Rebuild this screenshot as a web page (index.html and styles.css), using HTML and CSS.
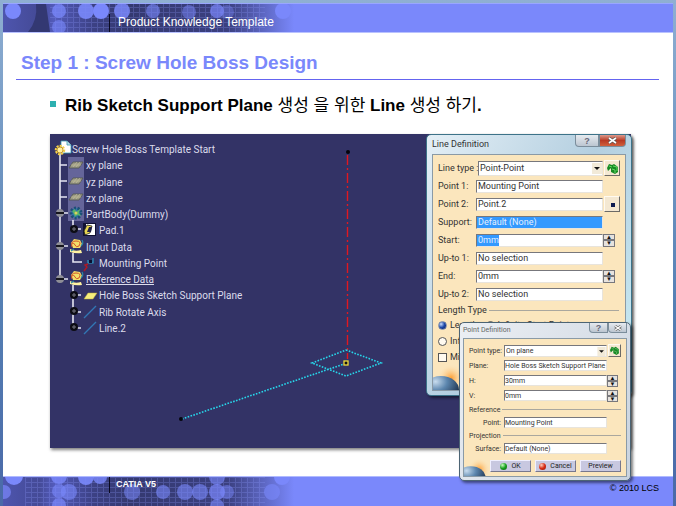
FILE: index.html
```
<!DOCTYPE html>
<html lang="ko">
<head>
    <meta charset="UTF-8">
    <meta name="viewport" content="width=device-width, initial-scale=1.0">
    <title>Product Knowledge Template</title>
    <link rel="stylesheet" href="styles.css">
</head>
<body>
    <div class="slide">
        <header class="banner">
            <svg class="banner-art" width="300" height="28" viewBox="3 4 300 28" aria-hidden="true">
                <defs>
                    <linearGradient id="fade" x1="0" x2="1" y1="0" y2="0">
                        <stop offset="0" stop-color="#4e55ae"/>
                        <stop offset="0.12" stop-color="#444a96"/>
                        <stop offset="0.17" stop-color="#535bbb"/>
                        <stop offset="0.3" stop-color="#3c4184"/>
                        <stop offset="0.42" stop-color="#343970"/>
                        <stop offset="0.75" stop-color="#3b4080"/>
                        <stop offset="0.97" stop-color="#7a88fb"/>
                    </linearGradient>
                    <pattern id="grid" width="6" height="5" patternUnits="userSpaceOnUse">
                        <path d="M1.5 0v5M0 2.5h6" stroke="#8f9cff" stroke-width="1" opacity="0.25"/>
                    </pattern>
                </defs>
                <rect x="3" y="4" width="300" height="28" fill="url(#fade)"/>
                <rect x="50" y="4" width="215" height="28" fill="url(#grid)"/>
                <path d="M36 4h10l4 28h-22q10-12 8-28z" fill="#333872"/>
                <g fill="#7a88fb">
                    <circle cx="13" cy="11" r="8"/>
                    <circle cx="59" cy="11" r="7" opacity="0.75"/>
                    <circle cx="59" cy="27" r="7" opacity="0.6"/>
                    <circle cx="86" cy="11" r="8" opacity="0.9"/>
                    <circle cx="101" cy="11" r="8"/>
                    <circle cx="122" cy="11" r="8" opacity="0.85"/>
                    <circle cx="153" cy="11" r="7" opacity="0.6"/>
                    <circle cx="189" cy="12" r="7" opacity="0.5"/>
                    <circle cx="217" cy="11" r="7" opacity="0.7"/>
                    <circle cx="227" cy="12" r="7" opacity="0.4"/>
                    <circle cx="283" cy="11" r="8"/>
                </g>
                <path d="M109.5 14v18" stroke="#0a0a20"/>
            </svg>
            <span class="banner-title">Product Knowledge Template</span>
        </header>

        <main>
            <h1 class="title">Step 1 : Screw Hole Boss Design</h1>
            <h2 class="topic">Rib Sketch Support Plane <span class="ko">생성 을 위한</span> Line <span class="ko">생성 하기</span>.</h2>

            <section class="viewport">
                <svg class="scene" width="420" height="314" viewBox="50 134 420 314" aria-hidden="true">
                    <defs>
                        <g id="minus">
                            <circle r="4" fill="#8e8e96"/>
                            <path d="M-4 0h8" stroke="#16161e" stroke-width="2"/>
                        </g>
                        <g id="plus">
                            <circle r="4" fill="#0c0c14"/>
                            <path d="M-2 0h4M0 -2v4" stroke="#777780"/>
                        </g>
                        <g id="plane">
                            <path d="M-7 3l4-6h10l-4 6z" fill="#9c9a86" stroke="#52564c" stroke-width="0.8"/>
                            <path d="M-3 2l4-5M0 2l4-5M-5 0h10" stroke="#c2be9a" stroke-width="0.7"/>
                        </g>
                        <g id="geoset">
                            <path d="M-5 -3l3-4 6 1 2 4-2 4h-7z" fill="#f3e06a"/>
                            <path d="M-4 1q-2-6 4-6t3 5q-3 2-4-1t-3-1" fill="none" stroke="#d4552a"/>
                            <path d="M-6 3q5 3 11 1l1 3q-6 1-12-1z" fill="#fff3a0"/>
                            <path d="M6 -6q2 3-1 6M-5 5l3-2" fill="none" stroke="#2b8ca8" stroke-width="1.2"/>
                        </g>
                    </defs>
                    <!-- tree branches -->
                    <rect x="68" y="157" width="16" height="64" fill="#65659a"/>
                    <path d="M60 152v127M60 165h7M60 181h7M60 197h7M60 213h8M60 246h8M60 279h8M73 220v9h8M73 253v9h9M73 285v43M74 295h7M74 312h7M74 328h7" fill="none" stroke="#e6e6f2" stroke-width="1.6"/>
                    <path d="M61 141h6l4 4v8h-10z" fill="#fff" stroke="#3a9ab0" stroke-width="0.8"/>
                    <path d="M67 141v4h4" fill="#bde0e8" stroke="#3a9ab0" stroke-width="0.8"/>
                    <circle cx="60" cy="150" r="4" fill="none" stroke="#f4d04a" stroke-width="2.5" stroke-dasharray="2 1"/>
                    <circle cx="60" cy="150" r="3" fill="#fff0a0" stroke="#b8861c" stroke-width="0.8"/>
                    <use href="#plane" x="76" y="165"/>
                    <use href="#plane" x="76" y="181"/>
                    <use href="#plane" x="76" y="197"/>
                    <circle cx="76" cy="213" r="5" fill="#2f79a8" stroke="#1c4f77" stroke-width="3" stroke-dasharray="2 1.5"/>
                    <path d="M72 211l3-2 1 3 4-3-1 4 2 3-4-1-2 2-1-3z" fill="#57b36a"/>
                    <circle cx="76" cy="213" r="1.5" fill="#d8d060"/>
                    <rect x="83" y="223" width="13" height="13" fill="#111133"/>
                    <path d="M86 224h9v11h-9z" fill="#fff"/>
                    <path d="M84 231l3-6 5 1-2 7-5 2z" fill="#e8d552" stroke="#222" stroke-width="0.8"/>
                    <path d="M87 232l2-5 3 0-1 5z" fill="#20204a"/>
                    <use href="#geoset" x="76" y="246"/>
                    <use href="#geoset" x="76" y="278"/>
                    <path d="M88 260v3h5v-5" fill="none" stroke="#2b9ac4" stroke-width="1.2"/>
                    <rect x="89" y="260" width="3" height="3" fill="#0a1030"/>
                    <path d="M88 264l-3 1 2 2-3 4" fill="none" stroke="#b01824" stroke-width="1.4"/>
                    <path d="M84 299l4-6h9l-4 6z" fill="#f6ee7c" stroke="#b8aa3a" stroke-width="0.5"/>
                    <path d="M84 318l12-12M84 334l12-12" stroke="#3277b4" stroke-width="1.4"/>
                    <use href="#minus" x="60" y="213"/>
                    <use href="#minus" x="60" y="246"/>
                    <use href="#minus" x="60" y="279"/>
                    <use href="#plus" x="74" y="229"/>
                    <use href="#plus" x="74" y="295"/>
                    <use href="#plus" x="74" y="311"/>
                    <use href="#plus" x="74" y="327"/>
                    <!-- sketch geometry -->
                    <path d="M347.5 155v204" stroke="#e01820" stroke-width="1.4" stroke-dasharray="10 3 2 3"/>
                    <circle cx="348" cy="152" r="2" fill="#05050c"/>
                    <path d="M346 350l35 13-35 13-34-13zM182 419l162-55" fill="none" stroke="#27d6ea" stroke-width="1.6" stroke-dasharray="1.6 1.4"/>
                    <circle cx="181" cy="419" r="2" fill="#05050c"/>
                    <rect x="344" y="361" width="4" height="4" fill="#111" stroke="#f0dc3c" stroke-width="1.3"/>
                </svg>

                <ul class="tree">
                    <li>Screw Hole Boss Template Start</li>
                    <li class="level1">xy plane</li>
                    <li class="level1">yz plane</li>
                    <li class="level1">zx plane</li>
                    <li class="level1">PartBody(Dummy)</li>
                    <li class="level2">Pad.1</li>
                    <li class="level1">Input Data</li>
                    <li class="level2">Mounting Point</li>
                    <li class="level1"><u>Reference Data</u></li>
                    <li class="level2">Hole Boss Sketch Support Plane</li>
                    <li class="level2">Rib Rotate Axis</li>
                    <li class="level2">Line.2</li>
                </ul>

                <form class="window line-window">
                    <div class="window-bar">
                        <span class="window-title">Line Definition</span>
                        <span class="window-buttons">
                            <button type="button">?</button><button type="button" class="close">
                                <svg width="9" height="7" viewBox="0 0 9 7" aria-label="Close"><path d="M1 1l7 5M8 1l-7 5" stroke="#555" stroke-width="3"/><path d="M1 1l7 5M8 1l-7 5" stroke="#fff" stroke-width="1.6"/></svg>
                            </button>
                        </span>
                    </div>
                    <div class="window-body">
                        <svg class="corner" width="32" height="26" viewBox="0 0 32 26" aria-hidden="true">
                            <defs>
                                <radialGradient id="glow"><stop offset="0" stop-color="#ff9d2e"/><stop offset="1" stop-color="#fbe6bd" stop-opacity="0"/></radialGradient>
                                <radialGradient id="globe" cx="0.35" cy="0.2" r="0.8"><stop offset="0" stop-color="#c8dcee"/><stop offset="0.4" stop-color="#5c86ae"/><stop offset="1" stop-color="#14243c"/></radialGradient>
                            </defs>
                            <circle cx="18" cy="14" r="14" fill="url(#glow)"/>
                            <ellipse cx="8" cy="26" rx="18" ry="14" fill="url(#globe)"/>
                        </svg>
                        <div class="row">
                            <label for="lineType">Line type :</label>
                            <span class="combo">
                                <select id="lineType"><option>Point-Point</option></select>
                                <svg class="arrow" width="10" height="11" viewBox="0 0 10 11" aria-hidden="true"><rect width="10" height="11" fill="#f2ead8"/><path d="M2 4h6l-3 3z" fill="#111"/></svg>
                            </span>
                            <button type="button" class="tool" aria-label="Lock">
                                <svg width="13" height="11" viewBox="0 0 13 11"><path d="M1 5l2-4 3 1 2-1 4 3v5l-3 2-4-2V5L2 8z" fill="#168a24"/><path d="M3 3l3 1M7 3l4 1v4M6 6l3 1v3" fill="none" stroke="#62d766"/></svg>
                            </button>
                        </div>
                        <div class="row">
                            <label for="point1">Point 1:</label>
                            <input type="text" id="point1" value="Mounting Point">
                        </div>
                        <div class="row">
                            <label for="point2">Point 2:</label>
                            <input type="text" id="point2" value="Point.2">
                            <button type="button" class="tool" aria-label="Point">
                                <svg width="13" height="11" viewBox="0 0 13 11"><path d="M5 4h4v4h-4z" fill="#0c1a50"/></svg>
                            </button>
                        </div>
                        <div class="row">
                            <label for="support">Support:</label>
                            <input type="text" id="support" class="active" value="Default (None)">
                        </div>
                        <div class="row">
                            <label for="start">Start:</label>
                            <input type="text" id="start" class="selected" value="0mm">
                            <span class="spin"><button type="button">▲</button><button type="button">▼</button></span>
                        </div>
                        <div class="row">
                            <label for="upto1">Up-to 1:</label>
                            <input type="text" id="upto1" value="No selection">
                        </div>
                        <div class="row">
                            <label for="end">End:</label>
                            <input type="text" id="end" value="0mm">
                            <span class="spin"><button type="button">▲</button><button type="button">▼</button></span>
                        </div>
                        <div class="row">
                            <label for="upto2">Up-to 2:</label>
                            <input type="text" id="upto2" value="No selection">
                        </div>
                        <div class="group">Length Type</div>
                        <div class="choices">
                            <label><input type="radio" name="length" checked>Length</label>
                            <label><input type="radio" name="length">Infinite Start Point</label>
                        </div>
                        <div class="choices">
                            <label><input type="radio" name="length">Inf</label>
                        </div>
                        <div class="choices">
                            <label><input type="checkbox">Mi</label>
                        </div>
                    </div>
                </form>

                <form class="window point-window">
                    <div class="window-bar">
                        <span class="window-title">Point Definition</span>
                        <span class="window-buttons">
                            <button type="button">?</button><button type="button">
                                <svg width="8" height="6" viewBox="0 0 9 7" aria-label="Close"><path d="M1 1l7 5M8 1l-7 5" stroke="#666" stroke-width="3"/><path d="M1 1l7 5M8 1l-7 5" stroke="#fff" stroke-width="1.4"/></svg>
                            </button>
                        </span>
                    </div>
                    <div class="window-body">
                        <svg class="corner" width="27" height="18" viewBox="0 0 32 22" aria-hidden="true">
                            <circle cx="18" cy="14" r="14" fill="url(#glow)"/>
                            <ellipse cx="8" cy="24" rx="18" ry="14" fill="url(#globe)"/>
                        </svg>
                        <div class="row">
                            <label for="pointType">Point type:</label>
                            <span class="combo">
                                <select id="pointType"><option>On plane</option></select>
                                <svg class="arrow" width="9" height="9" viewBox="0 0 10 11" aria-hidden="true"><rect width="10" height="11" fill="#f2ead8"/><path d="M2 4h6l-3 3z" fill="#111"/></svg>
                            </span>
                            <button type="button" class="tool" aria-label="Lock">
                                <svg width="11" height="9" viewBox="0 0 13 11"><path d="M1 5l2-4 3 1 2-1 4 3v5l-3 2-4-2V5L2 8z" fill="#168a24"/><path d="M3 3l3 1M7 3l4 1v4M6 6l3 1v3" fill="none" stroke="#62b766"/></svg>
                            </button>
                        </div>
                        <div class="row">
                            <label for="plane1">Plane:</label>
                            <input type="text" id="plane1" value="Hole Boss Sketch Support Plane">
                        </div>
                        <div class="row">
                            <label for="h">H:</label>
                            <input type="text" id="h" value="30mm">
                            <span class="spin"><button type="button">▲</button><button type="button">▼</button></span>
                        </div>
                        <div class="row">
                            <label for="v">V:</label>
                            <input type="text" id="v" value="0mm">
                            <span class="spin"><button type="button">▲</button><button type="button">▼</button></span>
                        </div>
                        <div class="group">Reference</div>
                        <div class="row indent">
                            <label for="refPoint">Point:</label>
                            <input type="text" id="refPoint" value="Mounting Point">
                        </div>
                        <div class="group">Projection</div>
                        <div class="row indent">
                            <label for="surface">Surface:</label>
                            <input type="text" id="surface" value="Default (None)">
                        </div>
                        <div class="actions">
                            <button type="button"><span class="dot green"></span>OK</button>
                            <button type="button"><span class="dot red"></span>Cancel</button>
                            <button type="button">Preview</button>
                        </div>
                    </div>
                </form>
            </section>
        </main>

        <footer class="footer">
            <svg class="banner-art" width="300" height="29" viewBox="3 477 300 29" aria-hidden="true">
                <rect x="3" y="477" width="300" height="29" fill="url(#fade)"/>
                <rect x="25" y="477" width="240" height="29" fill="url(#grid)"/>
                <g fill="#7a88fb">
                    <circle cx="14" cy="476" r="9"/>
                    <circle cx="4" cy="492" r="7" opacity="0.7"/>
                    <circle cx="59" cy="476" r="8" opacity="0.8"/>
                    <circle cx="59" cy="491" r="7" opacity="0.6"/>
                    <circle cx="69" cy="492" r="8" opacity="0.6"/>
                    <circle cx="59" cy="505" r="7" opacity="0.7"/>
                    <circle cx="86" cy="477" r="8" opacity="0.9"/>
                    <circle cx="100" cy="477" r="7" opacity="0.8"/>
                    <circle cx="132" cy="492" r="8" opacity="0.55"/>
                    <circle cx="163" cy="492" r="7" opacity="0.6"/>
                    <circle cx="185" cy="492" r="8" opacity="0.6"/>
                    <circle cx="200" cy="492" r="8" opacity="0.6"/>
                    <circle cx="217" cy="477" r="8" opacity="0.6"/>
                    <circle cx="217" cy="492" r="8" opacity="0.7"/>
                    <circle cx="227" cy="492" r="7" opacity="0.5"/>
                    <circle cx="217" cy="506" r="7" opacity="0.6"/>
                    <circle cx="272" cy="492" r="8" opacity="0.6"/>
                    <circle cx="282" cy="477" r="8"/>
                </g>
                <path d="M109.5 477v16" stroke="#0a0a20"/>
            </svg>
            <span class="product">CATIA V5</span>
            <span class="copyright">© 2010 LCS</span>
        </footer>
    </div>
</body>
</html>
```
FILE: styles.css
```
* {
    box-sizing: border-box;
}
body {
    margin: 0;
    padding: 3px 3px 0;
    min-height: 100vh;
    display: flex;
    background: linear-gradient(#8fafd2, #5580b4 60%, #4a69a8);
    font-family: "Liberation Sans", "Noto Sans CJK KR", sans-serif;
}
.slide {
    flex: 1;
    display: flex;
    flex-direction: column;
    background: #fff;
}
main {
    position: relative;
    z-index: 1;
}
.banner, .footer {
    position: relative;
    display: flex;
    background: #7a88fb;
}
.banner {
    height: 30px;
    padding: 11px 0 0 115px;
    border-top: 1px solid #99a6ff;
    border-bottom: 1px solid #b9c2ff;
}
.banner-art {
    position: absolute;
    left: 0;
    top: 0;
}
.banner-title {
    position: relative;
    font-size: 12px;
    line-height: 14px;
    color: #fff;
}
.title {
    margin: 0 14px 0 13px;
    padding: 18px 5px 4px;
    border-bottom: 1px solid #6464f0;
    font-size: 19px;
    line-height: 24px;
    color: #7a88fb;
}
.topic {
    margin: 0;
    padding: 12px 16px 16px 47px;
    font-size: 17px;
    line-height: 24px;
    color: #000;
}
.topic::before {
    content: "";
    display: inline-block;
    width: 6px;
    height: 6px;
    margin-right: 9px;
    vertical-align: 4px;
    background: #2eb0b0;
}
.ko {
    font-family: "Noto Sans CJK KR", sans-serif;
    font-weight: normal;
}
.viewport {
    position: relative;
    height: 314px;
    margin: 0 42px 28px 47px;
    background: #333366;
    box-shadow: 1px 2px 3px rgba(0, 0, 0, 0.5);
}
.scene {
    position: absolute;
    left: 0;
    top: 0;
}
.tree {
    position: relative;
    display: flex;
    flex-direction: column;
    height: 203px;
    margin: 0;
    padding: 8px 0 0 22px;
    list-style: none;
    font-family: Roboto, sans-serif;
    font-size: 10px;
    line-height: 16px;
    color: #dcdcec;
}
.tree li {
    flex: 1;
}
.level1 {
    padding-left: 14px;
}
.level2 {
    padding-left: 27px;
}

/* dialogs floating over the 3D view */
.window {
    position: absolute;
    padding: 0 5px 5px;
    border: 1px solid #4c6474;
    border-radius: 5px;
    background: linear-gradient(120deg, #e4eff6, #b4cfe0 50%, #c9ecf4);
    box-shadow: 2px 2px 3px rgba(0, 0, 0, 0.5);
    font-family: Roboto, sans-serif;
    color: #333;
}
.line-window {
    top: 0;
    right: -1px;
    width: 206px;
    height: 262px;
    border-color: #3d7389;
    font-size: 9px;
}
.point-window {
    top: 188px;
    right: 0;
    width: 172px;
    height: 159px;
    padding: 0 3px 4px;
    background: linear-gradient(120deg, #eceff4, #c9d3df);
    font-size: 7px;
}
.window-bar {
    display: flex;
    justify-content: space-between;
    height: 19px;
}
.point-window .window-bar {
    height: 15px;
}
.window-title {
    line-height: 18px;
}
.point-window .window-title {
    line-height: 14px;
    color: #666;
}
.window-buttons {
    display: flex;
    height: 12px;
}
.window-buttons button {
    width: 24px;
    padding: 0;
    border: 1px solid #7b8d9b;
    border-top: 0;
    border-radius: 0 0 0 4px;
    background: linear-gradient(#e6eaef, #bcc6d1);
    font: bold 9px/10px "Liberation Sans", sans-serif;
    color: #667;
}
.window-buttons .close {
    width: 27px;
    border-radius: 0 0 4px 0;
    background: linear-gradient(#dc9a8c, #b83a24 50%, #d0603c);
}
.window-buttons svg {
    display: block;
    margin: auto;
}
.point-window .window-buttons {
    height: 10px;
}
.point-window .window-buttons button {
    width: 19px;
    line-height: 8px;
}
.window-body {
    position: relative;
    height: 237px;
    padding: 4px 6px 0 5px;
    border: 1px solid #8a9aa6;
    background: #fbe6bd;
}
.point-window .window-body {
    height: 139px;
    padding: 4px 5px 0;
}
.corner {
    position: absolute;
    left: 0;
    bottom: 0;
}
.row {
    display: grid;
    grid-template-columns: 37px 127px 17px;
    column-gap: 1px;
    align-items: center;
    height: 18px;
    white-space: nowrap;
}
.point-window .row {
    grid-template-columns: 34px 103px 13px;
    height: 15px;
}
.point-window .indent {
    height: 13px;
}
.indent label {
    text-align: right;
    padding-right: 2px;
}
input[type="text"], select {
    width: 100%;
    height: 13px;
    margin: 0;
    padding: 0 1px;
    border: 1px solid #e8e4dc;
    border-top-color: #77777c;
    border-left-color: #77777c;
    border-radius: 0;
    background: #fff;
    font: inherit;
    line-height: 11px;
    color: #333;
    outline: none;
    appearance: none;
}
.point-window input[type="text"] {
    height: 11px;
    padding: 0;
    line-height: 9px;
}
input[type="text"].active {
    background: #3399ff;
    color: #e4f0ff;
}
input[type="text"].selected {
    background: linear-gradient(#3399ff, #3399ff) no-repeat 0 0 / 22px 100% #fff;
    color: #e4f0ff;
}
.combo {
    position: relative;
    display: flex;
    margin-left: 2px;
}
select {
    height: 15px;
    line-height: 13px;
}
.point-window .combo {
    margin-left: 0;
}
.point-window select {
    height: 12px;
    line-height: 10px;
}
.arrow {
    position: absolute;
    right: 1px;
    top: 2px;
}
.tool {
    display: flex;
    align-items: center;
    justify-content: center;
    width: 16px;
    height: 16px;
    padding: 0;
    border: 1px solid #6c6a66;
    border-top-color: #fffaf0;
    border-left-color: #fffaf0;
    background: #f4e8d2;
}
.point-window .tool {
    width: 13px;
    height: 13px;
}
.spin {
    display: flex;
    flex-direction: column;
    width: 12px;
    height: 13px;
    margin-left: -1px;
}
.spin button {
    flex: 1;
    min-height: 0;
    padding: 0;
    border: 1px solid #77777c;
    background: #e6e2de;
    font-size: 6px;
    line-height: 4px;
    color: #111;
    overflow: hidden;
}
.point-window .spin {
    width: 11px;
    height: 12px;
}
.group {
    display: flex;
    align-items: center;
    gap: 2px;
    height: 14px;
}
.point-window .group {
    height: 13px;
}
.group::after {
    content: "";
    flex: 1;
    height: 1px;
    background: #aaa79e;
}
.choices {
    display: flex;
    gap: 8px;
    height: 16px;
    white-space: nowrap;
}
.choices label {
    display: flex;
    align-items: center;
    gap: 3px;
}
.choices input {
    appearance: none;
    width: 9px;
    height: 9px;
    margin: 0;
    border: 1px solid #555;
    background: #fffaf0;
}
.choices input[type="radio"] {
    border-radius: 50%;
}
.choices input:checked {
    border-color: #7788aa;
    background: radial-gradient(circle at 30% 30%, #c8dcff, #1c48a8 50%, #0c1c60);
}
.actions {
    position: relative;
    display: flex;
    justify-content: flex-end;
    gap: 4px;
    margin-top: 5px;
}
.actions button {
    display: flex;
    align-items: center;
    justify-content: center;
    gap: 4px;
    width: 41px;
    height: 12px;
    padding: 0;
    border: 1px solid #77778c;
    border-top-color: #f0f0ff;
    border-left-color: #f0f0ff;
    background: #c8c8e0;
    font: inherit;
    line-height: 10px;
    color: #222;
}
.dot {
    width: 7px;
    height: 7px;
    border-radius: 50%;
}
.green {
    background: radial-gradient(circle at 35% 30%, #c8ffc0, #18a020 50%, #0a5c10);
}
.red {
    background: radial-gradient(circle at 35% 30%, #ffd0c0, #d82c14 50%, #8c1408);
}

.footer {
    justify-content: space-between;
    height: 30px;
    margin-top: auto;
    padding: 2px 14px 0 113px;
    border-top: 1px solid #b0baff;
}
.product {
    position: relative;
    font-size: 9px;
    font-weight: bold;
    line-height: 11px;
    color: #fff;
}
.copyright {
    padding-top: 3px;
    font-size: 9px;
    line-height: 12px;
    color: #000;
}
```
